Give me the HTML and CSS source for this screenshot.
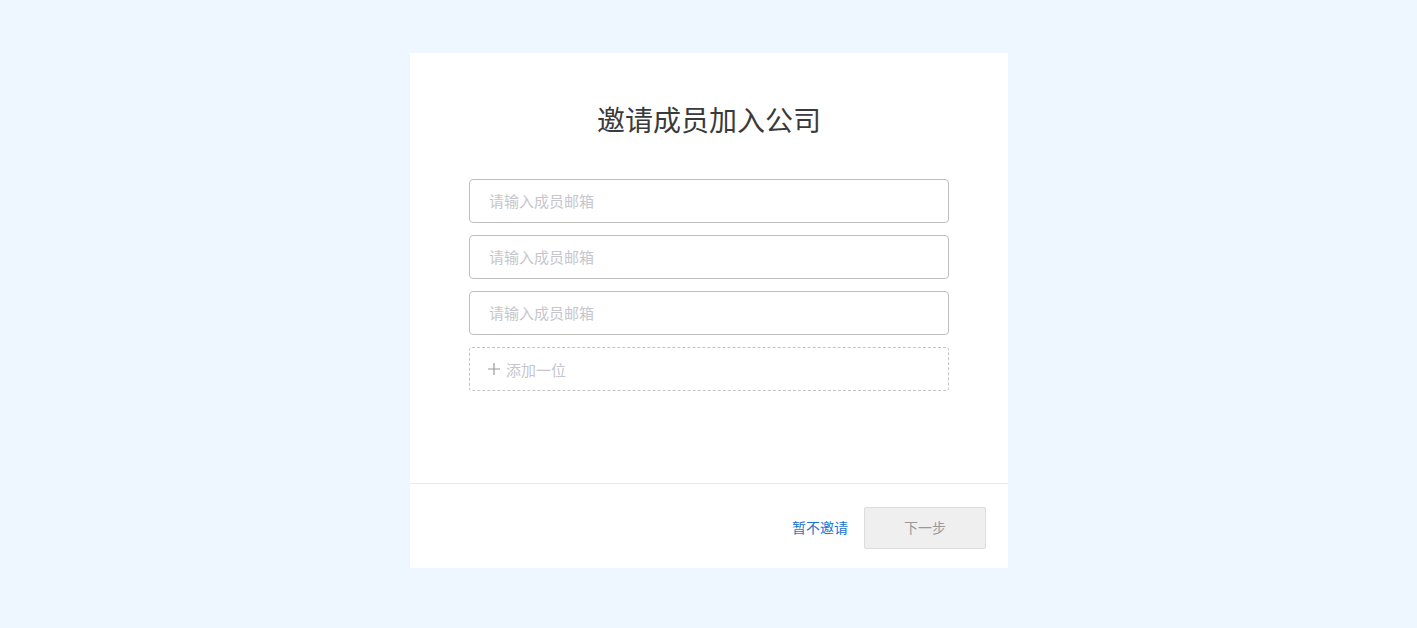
FILE: index.html
```html
<!DOCTYPE html>
<html lang="zh-CN">
<head>
<meta charset="utf-8">
<title>邀请成员加入公司</title>
<link rel="stylesheet" href="styles.css">
</head>
<body>
<div class="page">
  <div class="card">
    <div class="card-body">
      <h1 class="title">邀请成员加入公司</h1>
      <div class="fields">
        <input class="field" type="text" placeholder="请输入成员邮箱">
        <input class="field" type="text" placeholder="请输入成员邮箱">
        <input class="field" type="text" placeholder="请输入成员邮箱">
        <div class="add-row">
          <svg class="plus" width="12" height="12" viewBox="0 0 12 12"><path d="M6 0V12M0 6H12" stroke="#999" stroke-width="1.2" fill="none"/></svg>
          <span class="add-text">添加一位</span>
        </div>
      </div>
    </div>
    <div class="card-footer">
      <a class="skip" href="#">暂不邀请</a>
      <button class="next" type="button">下一步</button>
    </div>
  </div>
</div>
</body>
</html>
```
FILE: styles.css
```css
html, body {
  margin: 0;
  padding: 0;
  background: #eef6ff;
  font-family: "Noto Sans CJK SC", "Noto Sans", sans-serif;
}
.page {
  height: 628px;
  display: flex;
  justify-content: center;
  align-items: flex-start;
  padding-top: 53px;
  box-sizing: border-box;
}
.card {
  width: 598px;
  height: 515px;
  background: #fff;
  display: flex;
  flex-direction: column;
  margin-left: 1px;
}
.card-body {
  flex: 1;
  padding: 46px 59px 0;
}
.title {
  margin: 0;
  font-size: 28px;
  line-height: 40px;
  font-weight: 400;
  color: #3a3a3a;
  text-align: center;
}
.fields {
  margin-top: 40px;
  display: flex;
  flex-direction: column;
  gap: 12px;
}
.field {
  display: block;
  width: 480px;
  height: 44px;
  box-sizing: border-box;
  border: 1px solid #bfbfbf;
  border-radius: 4px;
  padding: 0 19px 2px;
  font-family: inherit;
  font-size: 15px;
  color: #333;
  outline: none;
  background: #fff;
}
.field::placeholder {
  color: #c6c6cc;
}
.add-row {
  height: 44px;
  box-sizing: border-box;
  border: 1px dashed #c4c4c4;
  border-radius: 3px;
  display: flex;
  align-items: center;
  padding: 0 0 0 18px;
  gap: 6px;
  color: #c6c6cc;
  font-size: 15px;
}
.card-footer {
  height: 85px;
  box-sizing: border-box;
  border-top: 1px solid #e8e8e8;
  display: flex;
  justify-content: flex-end;
  align-items: center;
  padding: 4px 22px 0 0;
  gap: 16px;
}
.skip {
  color: #1a73d0;
  font-size: 14px;
  text-decoration: none;
  padding-bottom: 2px;
}
.next {
  width: 122px;
  height: 42px;
  background: #efefef;
  border: 1px solid #dcdcdc;
  border-radius: 2px;
  color: #999;
  font-family: inherit;
  font-size: 14px;
  padding: 0 0 2px;
}
```
